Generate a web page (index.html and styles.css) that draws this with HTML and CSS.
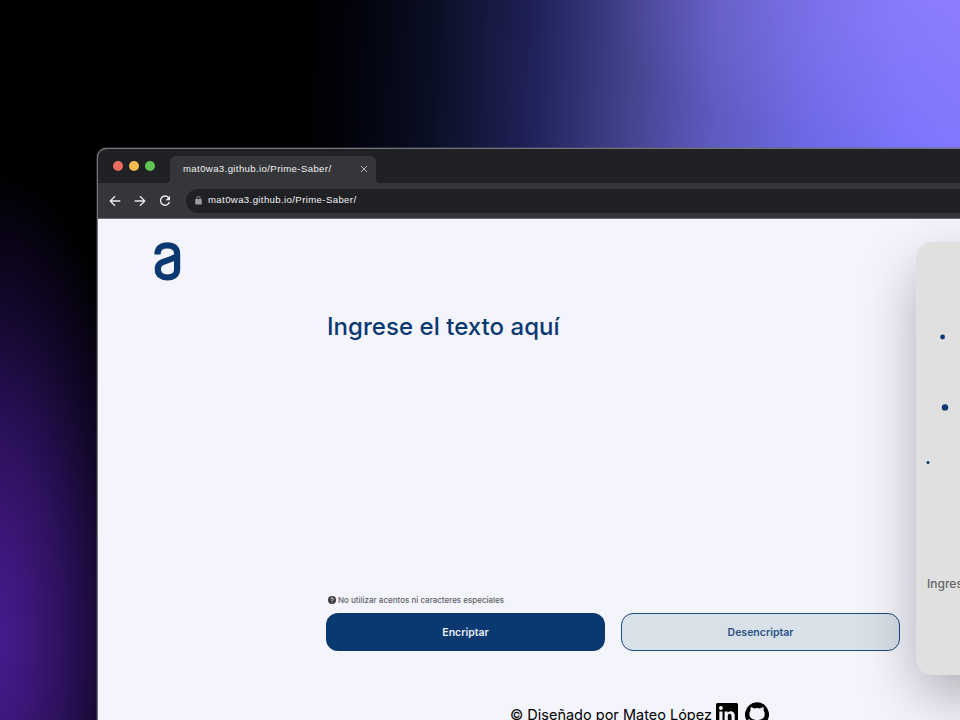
FILE: index.html
```html
<!DOCTYPE html>
<html lang="es">
<head>
<meta charset="utf-8">
<title>Prime-Saber</title>
<link rel="stylesheet" href="styles.css">
</head>
<body>
<div class="window">
  <div class="tabs">
    <div class="lights"><i class="red"></i><i class="yellow"></i><i class="green"></i></div>
    <div class="tab">
      <span>mat0wa3.github.io/Prime-Saber/</span>
      <svg width="8" height="8" viewBox="0 0 8 8" fill="none" stroke="#b4b5b7" stroke-width="1"><path d="M1 1l6 6M7 1L1 7"/></svg>
    </div>
  </div>
  <div class="toolbar">
    <svg width="12" height="12" viewBox="0 0 12 12" fill="none" stroke="#e8eaed" stroke-width="1.3"><path d="M11.3 6H1.4M6 1.2L1.2 6 6 10.8"/></svg>
    <svg width="12" height="12" viewBox="0 0 12 12" fill="none" stroke="#e8eaed" stroke-width="1.3"><path d="M.7 6h9.9M6 1.2L10.8 6 6 10.8"/></svg>
    <svg width="12" height="12" viewBox="0 0 12 12" fill="none" stroke="#e8eaed" stroke-width="1.4"><path d="M9.6 2.6A4.6 4.6 0 1 0 10.5 7"/><path d="M11 .8v4.4H6.6z" fill="#e8eaed" stroke="none"/></svg>
    <div class="address">
      <svg width="7" height="9" viewBox="0 0 7 9"><rect x=".2" y="3" width="6.6" height="5.6" rx=".8" fill="#9a9b9e"/><path d="M1.8 3.3V2.2a1.7 1.7 0 0 1 3.4 0v1.1" fill="none" stroke="#9a9b9e" stroke-width=".9"/></svg>
      <span>mat0wa3.github.io/Prime-Saber/</span>
    </div>
  </div>
  <div class="page">
    <svg class="logo" width="27" height="39" viewBox="0 0 27 39" fill="none" stroke="#0a3871" stroke-width="6.2"><path d="M3.5 12.500C3.5 6 7.5 3.300 13.400 3.300S23.100 6.300 23.100 11.500V27.500C23.100 32.800 18.800 35.500 13.300 35.500S3.800 32.800 3.800 27.300C3.800 17.500 15 20.500 22.500 14"/></svg>
    <main class="editor">
      <div class="input">Ingrese el texto aquí</div>
      <div class="note">
        <svg width="8" height="8" viewBox="0 0 8 8"><circle cx="4" cy="4" r="4" fill="#3d3e40"/><path d="M2.700 3.100C2.800 1.300 5.400 1.600 5.200 3.100 5.100 4 4 3.900 4 4.900M4 5.500v.9" stroke="#f3f4fc" stroke-width=".9" fill="none"/></svg>
        <span>No utilizar acentos ni caracteres especiales</span>
      </div>
      <div class="buttons">
        <button class="primary">Encriptar</button>
        <button class="secondary">Desencriptar</button>
      </div>
      <footer>
        <span>© Diseñado por Mateo López</span>
        <svg width="22" height="22" viewBox="0 0 22 22"><rect width="22" height="22" rx="1.5"/><path d="M3.300 8.400h3.200v10.300H3.300zM8.600 8.400h3v1.400c1.500-2.600 7.100-2.400 7.100 2.500v6.400h-3.200V13c0-3-3.700-2.800-3.700 0v5.700H8.600z" fill="#f3f4fc"/><circle cx="4.900" cy="5" r="1.900" fill="#f3f4fc"/></svg>
        <svg class="github" width="24" height="24" viewBox="0 0 24 24"><path d="M12 .3a12 12 0 0 0-3.800 23.400c.6.1.8-.3.8-.6v-2.200c-3.300.7-4-1.400-4-1.400-.6-1.400-1.400-1.800-1.400-1.800-1-.7.1-.7.1-.7 1.200.1 1.900 1.200 1.900 1.200 1 1.800 2.800 1.300 3.500 1 .1-.8.4-1.300.8-1.600-2.700-.3-5.500-1.300-5.500-5.900 0-1.300.5-2.400 1.200-3.200-.1-.3-.5-1.500.2-3.200 0 0 1-.3 3.300 1.200a11.500 11.500 0 0 1 6 0c2.300-1.500 3.300-1.200 3.300-1.200.7 1.700.2 2.900.1 3.200.8.8 1.200 1.900 1.200 3.200 0 4.600-2.800 5.600-5.500 5.900.5.4.8 1.100.8 2.200v3.300c0 .3.200.7.800.6A12 12 0 0 0 12 .3"/></svg>
      </footer>
    </main>
    <aside class="card">
      <svg width="280" height="200" viewBox="0 0 280 200" fill="#0a3871"><circle cx="14.600" cy="35" r="2.400"/><circle cx="17" cy="105.400" r="3.200"/><circle cx="0" cy="160.400" r="1.500"/></svg>
      <p>Ingresa el texto que desees encriptar o desencriptar.</p>
    </aside>
  </div>
</div>
</body>
</html>
```
FILE: styles.css
```css
* { box-sizing: border-box; }
html, body { height: 100%; }
body {
  margin: 0;
  padding: 148px 0 0 97px;
  overflow: hidden;
  background:
    radial-gradient(ellipse 160px 470px at -5px 640px, #461c90 0%, #3a1675 25%, #2a1058 46%, #12072a 72%, transparent 100%),
    radial-gradient(ellipse 330px 150px at 930px 0, rgba(160, 135, 250, .4), transparent),
    linear-gradient(93deg, #000 30%, #02030c 36%, #0b0f25 44%, #20225a 54%, #454490 64%, #5d5abf 72%, #6d69e6 82%, #7a74fa 91%, #8479ff 100%);
}
.window {
  width: 1240px;
  height: 640px;
  border: 1px solid #77757b;
  border-radius: 9px 9px 0 0;
  box-shadow: 0 0 0 1px rgba(100, 98, 105, .35);
  overflow: hidden;
  background: #f3f4fc;
}
.tabs {
  height: 34px;
  display: flex;
  align-items: flex-end;
  background: #202124;
}
.lights { display: flex; gap: 6px; padding: 0 15px 12px 15px; }
.lights i { width: 10px; height: 10px; border-radius: 50%; }
.red { background: #ed6a5e; }
.yellow { background: #f5bd4f; }
.green { background: #61c554; }
.tab {
  position: relative;
  width: 206px;
  height: 27px;
  padding: 0 8px 1px 13px;
  display: flex;
  align-items: center;
  justify-content: space-between;
  border-radius: 6px 6px 0 0;
  background: #35363a;
}
.tab span { padding-bottom: 2px; }
.tab::before, .tab::after {
  content: "";
  position: absolute;
  bottom: 0;
  width: 4px;
  height: 4px;
}
.tab::before { left: -4px; background: radial-gradient(circle at 0 0, transparent 4px, #35363a 4px); }
.tab::after { right: -4px; background: radial-gradient(circle at 100% 0, transparent 4px, #35363a 4px); }
.tab, .address { font: 9.600px "Liberation Sans", sans-serif; letter-spacing: .38px; color: #f1f1f2; }
.toolbar {
  height: 36px;
  padding-left: 11px;
  display: flex;
  align-items: center;
  gap: 13px;
  background: #35363a;
  border-bottom: 1px solid #6a6a6f;
}
.address {
  flex: 1;
  height: 24px;
  margin-left: 2px;
  padding: 0 0 1px 9px;
  display: flex;
  align-items: center;
  gap: 6px;
  border-radius: 12px;
  background: #202124;
}
.address span { padding-bottom: 1px; }
.page {
  display: grid;
  grid-template-columns: 228px 574px 300px;
  padding-top: 23px;
  font-family: Inter, sans-serif;
}
.logo { margin-left: 56px; }
.editor { padding-top: 69px; }
.input { height: 281px; padding-left: 1px; font-size: 24px; font-weight: 450; line-height: 32px; letter-spacing: .04px; color: #0a3871; }
.note { display: flex; align-items: center; gap: 2px; height: 16px; padding-left: 2px; font-size: 8px; font-weight: 500; color: #606166; }
.buttons { display: flex; gap: 16px; margin-top: 5px; }
button {
  width: 279px;
  height: 38px;
  padding: 0;
  border-radius: 12px;
  font: 600 10.500px Inter, sans-serif;
}
.primary { border: 0; background: #0a3871; color: #e9eef6; }
.secondary { border: 1px solid #1c4a85; background: #d8e0e8; color: #2d5288; }
footer { display: flex; align-items: center; margin: 51px 0 0 184px; height: 24px; font-size: 14.500px; color: #000; }
footer svg { margin-left: 4px; flex: none; }
footer .github { margin-left: 7px; }
.card {
  position: relative;
  margin-left: 16px;
  width: 320px;
  height: 433px;
  padding: 60px 0 0 12px;
  border-radius: 16px;
  background: #e0e0e0;
  box-shadow: 0 22px 60px -4px rgba(0, 0, 0, .32);
}
.card svg { display: block; overflow: visible; }
.card p { margin: 73px 0 0 -1px; white-space: nowrap; font-size: 12px; font-weight: 550; line-height: 18px; color: #66686b; }
```
